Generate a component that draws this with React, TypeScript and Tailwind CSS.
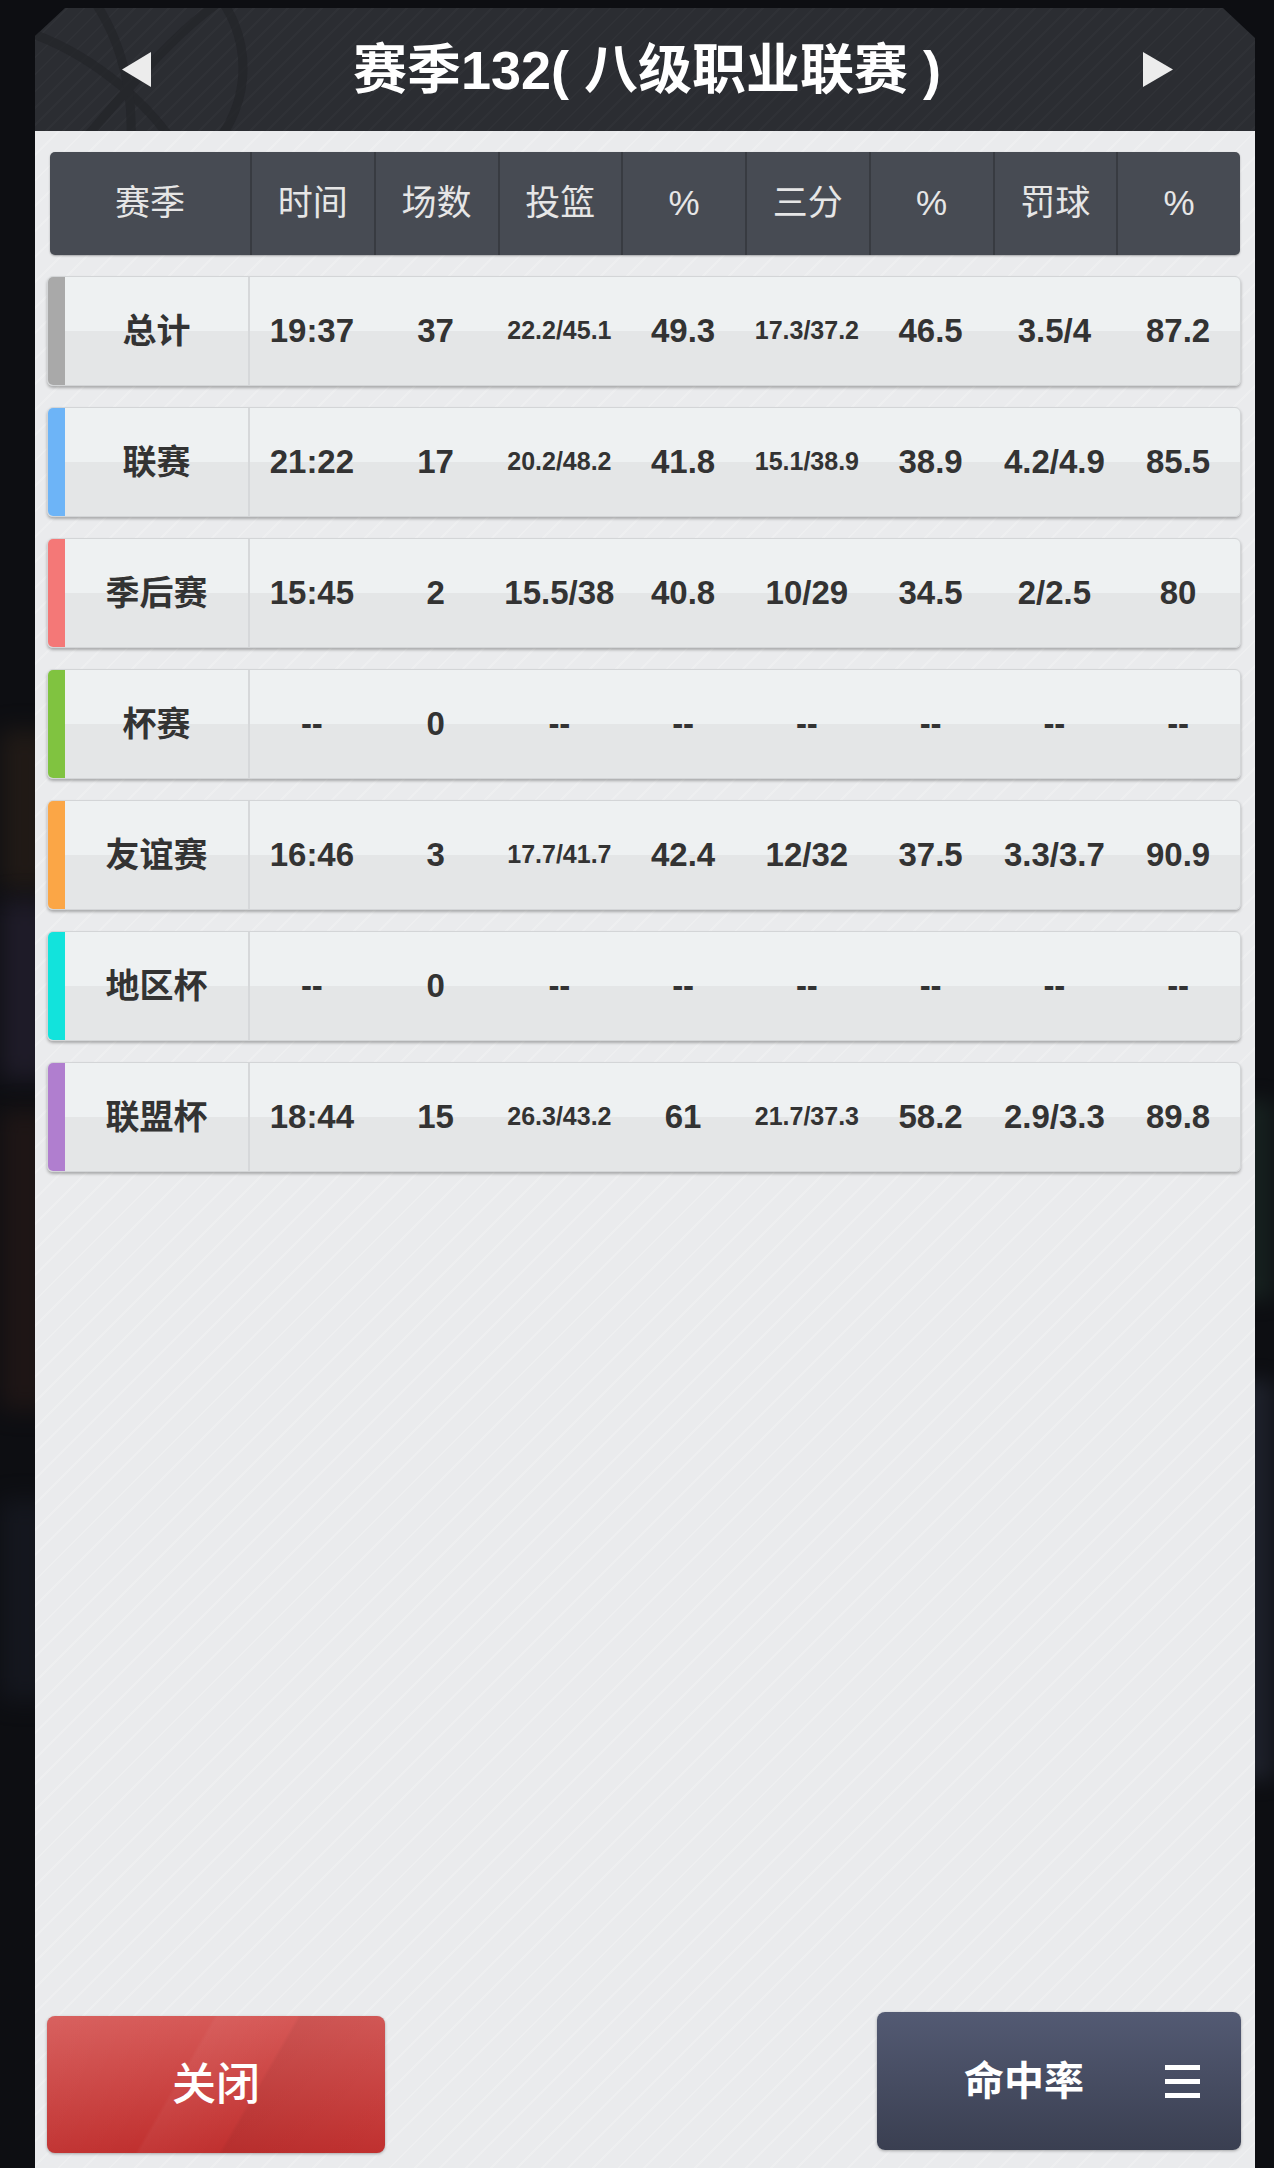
import React from 'react';

interface StatRow {
    name: string;
    stripe: string;
    values: string[];
}

const columns = ['时间', '场数', '投篮', '%', '三分', '%', '罚球', '%'];

const rows: StatRow[] = [
    { name: '总计', stripe: 'bg-[#a9a9a9]', values: ['19:37', '37', '22.2/45.1', '49.3', '17.3/37.2', '46.5', '3.5/4', '87.2'] },
    { name: '联赛', stripe: 'bg-[#6db4f7]', values: ['21:22', '17', '20.2/48.2', '41.8', '15.1/38.9', '38.9', '4.2/4.9', '85.5'] },
    { name: '季后赛', stripe: 'bg-[#f47877]', values: ['15:45', '2', '15.5/38', '40.8', '10/29', '34.5', '2/2.5', '80'] },
    { name: '杯赛', stripe: 'bg-[#80c340]', values: ['--', '0', '--', '--', '--', '--', '--', '--'] },
    { name: '友谊赛', stripe: 'bg-[#fba646]', values: ['16:46', '3', '17.7/41.7', '42.4', '12/32', '37.5', '3.3/3.7', '90.9'] },
    { name: '地区杯', stripe: 'bg-[#12e3dc]', values: ['--', '0', '--', '--', '--', '--', '--', '--'] },
    { name: '联盟杯', stripe: 'bg-[#b07ecf]', values: ['18:44', '15', '26.3/43.2', '61', '21.7/37.3', '58.2', '2.9/3.3', '89.8'] },
];

function Basketball() {
    // faint ball watermark in the title bar
    return (
        <svg className="absolute left-[-40px] top-[-70px] h-[260px] w-[260px]" viewBox="0 0 260 260" fill="none">
            <g stroke="#222327" strokeWidth="9" opacity="0.6">
                <circle cx="130" cy="130" r="118" />
                <path d="M20 90 C 90 110, 170 170, 200 245" />
                <path d="M60 20 C 120 70, 150 150, 130 250" />
                <path d="M230 60 C 170 100, 110 180, 60 235" />
            </g>
        </svg>
    );
}

export default function App() {
    return (
        <div className="relative h-[2168px] w-full overflow-hidden bg-[#0d0e12] font-['Liberation_Sans','Noto_Sans_CJK_SC',sans-serif]">
            {/* blurred game scene behind the dialog */}
            <div className="absolute left-0 top-[730px] h-[160px] w-[50px] bg-[#2e2219] blur-[12px] opacity-60" />
            <div className="absolute left-0 top-[900px] h-[180px] w-[50px] bg-[#2b2538] blur-[12px] opacity-60" />
            <div className="absolute left-0 top-[1110px] h-[300px] w-[50px] bg-[#2a1b18] blur-[12px] opacity-60" />
            <div className="absolute left-0 top-[1500px] h-[200px] w-[50px] bg-[#1a1d27] blur-[12px] opacity-60" />
            <div className="absolute right-0 top-[1100px] h-[200px] w-[40px] bg-[#1a2824] blur-[10px] opacity-70" />
            <div className="absolute right-0 top-[1380px] h-[400px] w-[40px] bg-[#242834] blur-[10px] opacity-70" />

            <div className="relative ml-[35px] mr-[19px] flex h-full flex-col pt-[8px]">
                {/* title bar */}
                <div className="relative flex h-[123px] shrink-0 items-center justify-between overflow-hidden bg-[#2b2d32] bg-[repeating-linear-gradient(135deg,transparent_0_10px,rgba(255,255,255,0.02)_10px_12px)] pl-[87px] pr-[82px] [clip-path:polygon(30px_0,calc(100%-32px)_0,100%_30px,100%_100%,0_100%,0_28px)]">
                    <Basketball />
                    <svg className="relative h-[35px] w-[29px]" viewBox="0 0 29 35">
                        <polygon points="29,0 29,35 0,17.5" fill="#ececec" />
                    </svg>
                    <h1 className="relative text-[54px] font-bold leading-none text-white">
                        赛季132( 八级职业联赛 )
                    </h1>
                    <svg className="relative h-[35px] w-[30px]" viewBox="0 0 30 35">
                        <polygon points="0,0 0,35 30,17.5" fill="#ececec" />
                    </svg>
                </div>

                {/* body */}
                <div className="flex flex-1 flex-col bg-[#eaebed] bg-[repeating-linear-gradient(135deg,transparent_0_16px,rgba(255,255,255,0.18)_16px_18px)] pb-[15px] pl-[12px] pr-[14px] pt-[21px]">
                    <div className="ml-[3px] mr-[1px] flex h-[103px] overflow-hidden rounded-[5px] bg-[#474b53] shadow-[0_1px_2px_rgba(0,0,0,0.3)]">
                        <div className="flex w-[200px] items-center justify-center text-[35px] text-[#e6e6e6]">赛季</div>
                        {columns.map((c, i) => (
                            <div key={i} className="flex flex-1 items-center justify-center border-l-2 border-[#383b41] text-[35px] text-[#e6e6e6]">
                                {c}
                            </div>
                        ))}
                    </div>

                    <div className="mt-[21px] flex flex-col gap-[21px]">
                        {rows.map(row => (
                            <div
                                key={row.name}
                                className="flex h-[110px] overflow-hidden rounded-[6px] border border-[#d3d5d7] bg-[linear-gradient(to_bottom,#eef1f2_0%,#eef1f2_50%,#e4e6e7_50%,#e4e6e7_100%)] shadow-[0_2px_3px_rgba(0,0,0,0.28)]"
                            >
                                <div className={`w-[17px] shrink-0 ${row.stripe}`} />
                                <div className="flex w-[185px] shrink-0 items-center justify-center border-r-2 border-[#d6d8da] text-[34px] font-bold text-[#333]">
                                    {row.name}
                                </div>
                                {row.values.map((v, i) => (
                                    <div
                                        key={i}
                                        className={`flex flex-1 items-center justify-center font-bold text-[#333] ${v.length >= 9 ? 'text-[25px]' : 'text-[33px]'}`}
                                    >
                                        {v}
                                    </div>
                                ))}
                            </div>
                        ))}
                    </div>

                    <div className="mt-auto flex items-end justify-between">
                        <button className="flex h-[137px] w-[338px] items-center justify-center rounded-[8px] bg-[#c93a38] bg-[linear-gradient(120deg,rgba(255,255,255,0.05)_0%,rgba(255,255,255,0)_40%,rgba(255,255,255,0.04)_41%,rgba(0,0,0,0)_60%,rgba(0,0,0,0.05)_61%,rgba(0,0,0,0)_100%),linear-gradient(to_bottom,#d65957,#c0302f)] text-[44px] font-medium text-white shadow-[0_1px_3px_rgba(0,0,0,0.3)]">
                            关闭
                        </button>
                        <button className="mb-[3px] flex h-[138px] w-[364px] items-center justify-end gap-[81px] rounded-[8px] bg-[linear-gradient(to_bottom,#535a73,#3a3f51)] pr-[41px] text-[40px] font-bold text-white shadow-[0_1px_3px_rgba(0,0,0,0.3)]">
                            <span>命中率</span>
                            <span className="flex h-[33px] w-[35px] flex-col justify-between">
                                <span className="h-[5px] w-full bg-white" />
                                <span className="h-[5px] w-full bg-white" />
                                <span className="h-[5px] w-full bg-white" />
                            </span>
                        </button>
                    </div>
                </div>
            </div>
        </div>
    );
}
